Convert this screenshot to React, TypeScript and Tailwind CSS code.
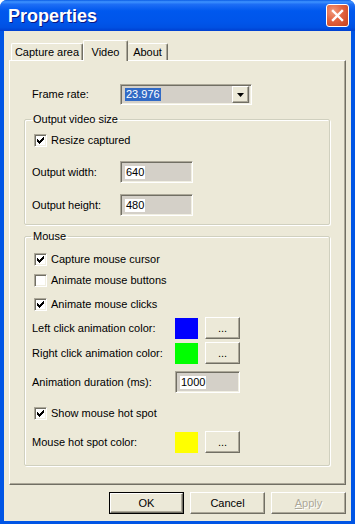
import React from "react";

const font = { fontFamily: '"Liberation Sans", Arial, sans-serif' };

const CHECK = [
  "......#",
  ".....##",
  "#...###",
  "##.###.",
  "#####..",
  ".###...",
  "..#....",
];

function Check({ checked }: { checked: boolean }) {
  return (
    <div className="w-[13px] h-[13px] bg-white border border-t-[#ACA899] border-l-[#ACA899] border-r-white border-b-white shadow-[inset_1px_1px_0_#716F64,inset_-1px_-1px_0_#F1EFE2] flex items-center justify-center shrink-0">
      {checked && (
        <svg width="7" height="7" viewBox="0 0 7 7" shapeRendering="crispEdges">
          {CHECK.flatMap((row, y) =>
            row.split("").map((c, x) =>
              c === "#" ? <rect key={`${x}-${y}`} x={x} y={y} width="1" height="1" fill="#000" /> : null
            )
          )}
        </svg>
      )}
    </div>
  );
}

function CheckRow({ checked, label, mt }: { checked: boolean; label: string; mt: string }) {
  return (
    <div className={`flex items-center h-[13px] pl-[9px] ${mt}`}>
      <Check checked={checked} />
      <span className="ml-[4px] text-[11px] leading-[13px] text-black">{label}</span>
    </div>
  );
}

function Edit({ value, w }: { value: string; w: string }) {
  return (
    <div className={`${w} h-[22px] bg-[#D4D0C8] border border-t-[#ACA899] border-l-[#ACA899] border-r-white border-b-white shadow-[inset_1px_1px_0_#716F64,inset_-1px_-1px_0_#F1EFE2] flex items-center pl-[4px]`}>
      <span className="bg-white text-[11px] leading-[13px] px-[1px] text-black">{value}</span>
    </div>
  );
}

function Btn({ children, w, className = "" }: { children: React.ReactNode; w: string; className?: string }) {
  return (
    <div className={`${w} h-[22px] bg-[#ECE9D8] border border-t-white border-l-white border-r-[#716F64] border-b-[#716F64] shadow-[inset_-1px_-1px_0_#ACA899] flex items-center justify-center text-[11px] ${className}`}>
      {children}
    </div>
  );
}

function Swatch({ color }: { color: string }) {
  return <div className="w-[23px] h-[21px] shrink-0" style={{ backgroundColor: color }} />;
}

function ColorRow({ label, color, mt }: { label: string; color: string; mt: string }) {
  return (
    <div className={`flex items-center h-[22px] pl-[7px] ${mt}`}>
      <span className="w-[143px] text-[11px]">{label}</span>
      <Swatch color={color} />
      <Btn w="w-[35px]" className="ml-[7px]">...</Btn>
    </div>
  );
}

export default function App() {
  return (
    <div
      className="w-[355px] h-[524px] flex flex-col rounded-t-[7px] overflow-hidden bg-[#0055E5] text-black"
      style={font}
    >
      {/* Title bar */}
      <div className="h-[31px] shrink-0 flex items-center justify-between pl-[8px] pr-[6px] bg-[linear-gradient(to_bottom,#0A5CE4_0%,#3E93FF_6%,#1D6EF5_14%,#0058EE_35%,#0055EA_70%,#0051E3_88%,#003FD0_100%)]">
        <span className="text-white font-bold text-[18px] leading-none [text-shadow:1px_1px_0_#0A1883]">
          Properties
        </span>
        <div className="w-[23px] h-[23px] rounded-[3px] border border-white bg-[radial-gradient(circle_at_30%_30%,#F09A7C_0%,#E2633F_45%,#C7401C_100%)] flex items-center justify-center">
          <svg width="13" height="13" viewBox="0 0 13 13">
            <path d="M2 2L11 11M11 2L2 11" stroke="#fff" strokeWidth="2.4" strokeLinecap="square" />
          </svg>
        </div>
      </div>

      {/* Body */}
      <div className="flex-1 mx-[4px] mb-[3px] bg-[#ECE9D8] flex flex-col pt-[9px] px-[5px]">
        {/* Tabs */}
        <div className="h-[20px] flex items-end pl-[2px] relative z-10 text-[11px]">
          <div className="w-[72px] h-[17px] border-t border-l border-t-white border-l-white border-r border-r-[#716F64] shadow-[inset_-1px_0_0_#ACA899] rounded-t-[2px] flex items-center justify-center pt-[1px]">
            Capture area
          </div>
          <div className="w-[45px] h-[21px] mb-[-1px] bg-[#ECE9D8] border-t border-l border-t-white border-l-white border-r border-r-[#716F64] shadow-[inset_-1px_0_0_#ACA899] rounded-t-[2px] flex items-start justify-center pt-[3px]">
            Video
          </div>
          <div className="w-[40px] h-[17px] border-t border-t-white border-r border-r-[#716F64] shadow-[inset_-1px_0_0_#ACA899] rounded-t-[2px] flex items-center justify-center pt-[1px]">
            About
          </div>
        </div>

        {/* Panel */}
        <div className="h-[425px] shrink-0 border border-t-white border-l-white border-r-[#716F64] border-b-[#716F64] shadow-[inset_-1px_-1px_0_#ACA899] flex flex-col text-[11px]">
          <div className="flex items-center h-[21px] mt-[23px] pl-[22px]">
            <span className="w-[88px]">Frame rate:</span>
            <div className="w-[132px] h-[21px] bg-[#D4D0C8] border border-t-[#ACA899] border-l-[#ACA899] border-r-white border-b-white shadow-[inset_1px_1px_0_#716F64,inset_-1px_-1px_0_#F1EFE2] flex items-center pl-[4px] pr-[2px]">
              <span className="bg-[#316AC5] text-white leading-[13px] px-[1px]">23.976</span>
              <div className="ml-auto w-[17px] h-[17px] border border-t-white border-l-white border-r-[#716F64] border-b-[#716F64] shadow-[inset_-1px_-1px_0_#ACA899] bg-[#ECE9D8] flex items-center justify-center">
                <svg width="7" height="4" viewBox="0 0 7 4">
                  <path d="M0 0H7L3.5 4Z" fill="#000" />
                </svg>
              </div>
            </div>
          </div>

          <fieldset className="ml-[14px] mr-[15px] mt-[8px] border border-[#D0D0BF] shadow-[1px_1px_0_#fff,inset_1px_1px_0_#fff] pb-[8px] rounded-[2px]">
            <legend className="ml-[6px] px-[2px] text-[11px] leading-[13px]">Output video size</legend>
            <CheckRow checked label="Resize captured" mt="mt-[8px]" />
            <div className="flex items-center h-[22px] mt-[14px] pl-[7px]">
              <span className="w-[88px]">Output width:</span>
              <Edit value="640" w="w-[73px]" />
            </div>
            <div className="flex items-center h-[22px] mt-[11px] pl-[7px]">
              <span className="w-[88px]">Output height:</span>
              <Edit value="480" w="w-[73px]" />
            </div>
          </fieldset>

          <fieldset className="ml-[14px] mr-[15px] mt-[5px] border border-[#D0D0BF] shadow-[1px_1px_0_#fff,inset_1px_1px_0_#fff] pb-[12px] rounded-[2px]">
            <legend className="ml-[6px] px-[2px] text-[11px] leading-[13px]">Mouse</legend>
            <CheckRow checked label="Capture mouse cursor" mt="mt-[10px]" />
            <CheckRow checked={false} label="Animate mouse buttons" mt="mt-[8px]" />
            <CheckRow checked label="Animate mouse clicks" mt="mt-[11px]" />
            <ColorRow label="Left click animation color:" color="#0000FF" mt="mt-[6px]" />
            <ColorRow label="Right click animation color:" color="#00FF00" mt="mt-[3px]" />
            <div className="flex items-center h-[22px] mt-[7px] pl-[7px]">
              <span className="w-[143px]">Animation duration (ms):</span>
              <Edit value="1000" w="w-[65px]" />
            </div>
            <CheckRow checked label="Show mouse hot spot" mt="mt-[14px]" />
            <ColorRow label="Mouse hot spot color:" color="#FFFF00" mt="mt-[11px]" />
          </fieldset>
        </div>

        {/* Buttons */}
        <div className="flex justify-end gap-[6px] mt-[7px]">
          <div className="w-[75px] h-[22px] border border-black">
            <Btn w="w-full" className="!h-[20px]">OK</Btn>
          </div>
          <Btn w="w-[75px]">Cancel</Btn>
          <Btn w="w-[75px]" className="text-[#ACA899] [text-shadow:1px_1px_0_#fff]">
            <span>
              <span className="underline">A</span>pply
            </span>
          </Btn>
        </div>
      </div>
    </div>
  );
}
